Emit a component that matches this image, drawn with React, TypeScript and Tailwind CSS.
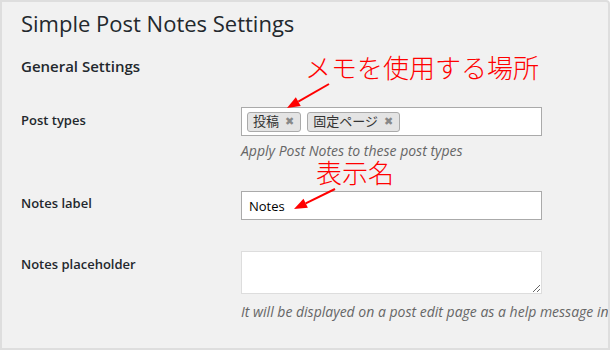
import { useState } from "react";

const SANS = "font-['Open_Sans','Noto_Sans_CJK_JP',sans-serif]";

function Tag({ label }: { label: string }) {
  return (
    <span className="flex h-[20px] items-center gap-[6px] rounded-[3px] border border-[#aaa] bg-[#e4e4e4] pl-[5px] pr-[6px] text-[13px] leading-none text-[#333]">
      {label}
      <span className="font-['DejaVu_Sans',sans-serif] text-[11px] text-[#888]">✖</span>
    </span>
  );
}

function Arrow({ x1, y1, x2, y2 }: { x1: number; y1: number; x2: number; y2: number }) {
  // red arrow with a solid head at (x2, y2)
  const a = Math.atan2(y2 - y1, x2 - x1);
  const len = 13;
  const w = 5;
  const bx = x2 - len * Math.cos(a);
  const by = y2 - len * Math.sin(a);
  const px = -Math.sin(a) * w;
  const py = Math.cos(a) * w;
  return (
    <>
      <line x1={x1} y1={y1} x2={bx} y2={by} stroke="#f00" strokeWidth={2} />
      <polygon points={`${x2},${y2} ${bx + px},${by + py} ${bx - px},${by - py}`} fill="#f00" />
    </>
  );
}

export default function App() {
  const [label, setLabel] = useState("Notes");

  return (
    <div className={`relative h-[350px] w-[610px] overflow-hidden rounded-tr-[4px] border-2 border-[#dedede] bg-[#f1f1f1] text-[#23282d] ${SANS}`}>
      <div className="pl-[19px] pt-[6px]">
        <h1 className="text-[22px] leading-[30px] font-normal">Simple Post Notes Settings</h1>
        <h2 className="mt-[18px] text-[15px] leading-[20px] font-semibold">General Settings</h2>

        <div className="mt-[31px] flex">
          <div className="w-[220px] shrink-0 pt-[4px] text-[13px] font-semibold leading-[18px]">Post types</div>
          <div>
            <div className="flex h-[29px] w-[301px] items-center gap-[6px] border border-[#aaa] bg-white px-[5px]">
              <Tag label="投稿" />
              <Tag label="固定ページ" />
            </div>
            <p className="mt-[6px] text-[14px] italic leading-[18px] text-[#666]">Apply Post Notes to these post types</p>
          </div>
        </div>

        <div className="mt-[31px] flex">
          <div className="w-[220px] shrink-0 pt-[3px] text-[13px] font-semibold leading-[18px]">Notes label</div>
          <input
            value={label}
            onChange={(e) => setLabel(e.target.value)}
            className="h-[29px] w-[301px] border border-[#aaa] bg-white px-[7px] text-[13px] text-black outline-none"
          />
        </div>

        <div className="mt-[31px] flex">
          <div className="w-[220px] shrink-0 pt-[4px] text-[13px] font-semibold leading-[18px]">Notes placeholder</div>
          <div className="min-w-0">
            <textarea className="block h-[43px] w-[301px] border border-[#ddd] bg-white outline-none" />
            <p className="mt-[9px] whitespace-nowrap text-[14px] italic leading-[18px] text-[#666]">
              It will be displayed on a post edit page as a help message inside the textarea.
            </p>
          </div>
        </div>
      </div>

      <div className="pointer-events-none absolute left-[303px] top-[49px] text-[26px] font-light leading-[32px] text-[#f00] font-['Noto_Sans_CJK_JP',sans-serif]">
        メモを使用する場所
      </div>
      <div className="pointer-events-none absolute left-[314px] top-[154px] text-[26px] font-light leading-[32px] text-[#f00] font-['Noto_Sans_CJK_JP',sans-serif]">
        表示名
      </div>
      <svg className="pointer-events-none absolute left-0 top-0" width={610} height={350}>
        <Arrow x1={327} y1={82} x2={285} y2={106} />
        <Arrow x1={333} y1={187} x2={292} y2={207} />
      </svg>
    </div>
  );
}
